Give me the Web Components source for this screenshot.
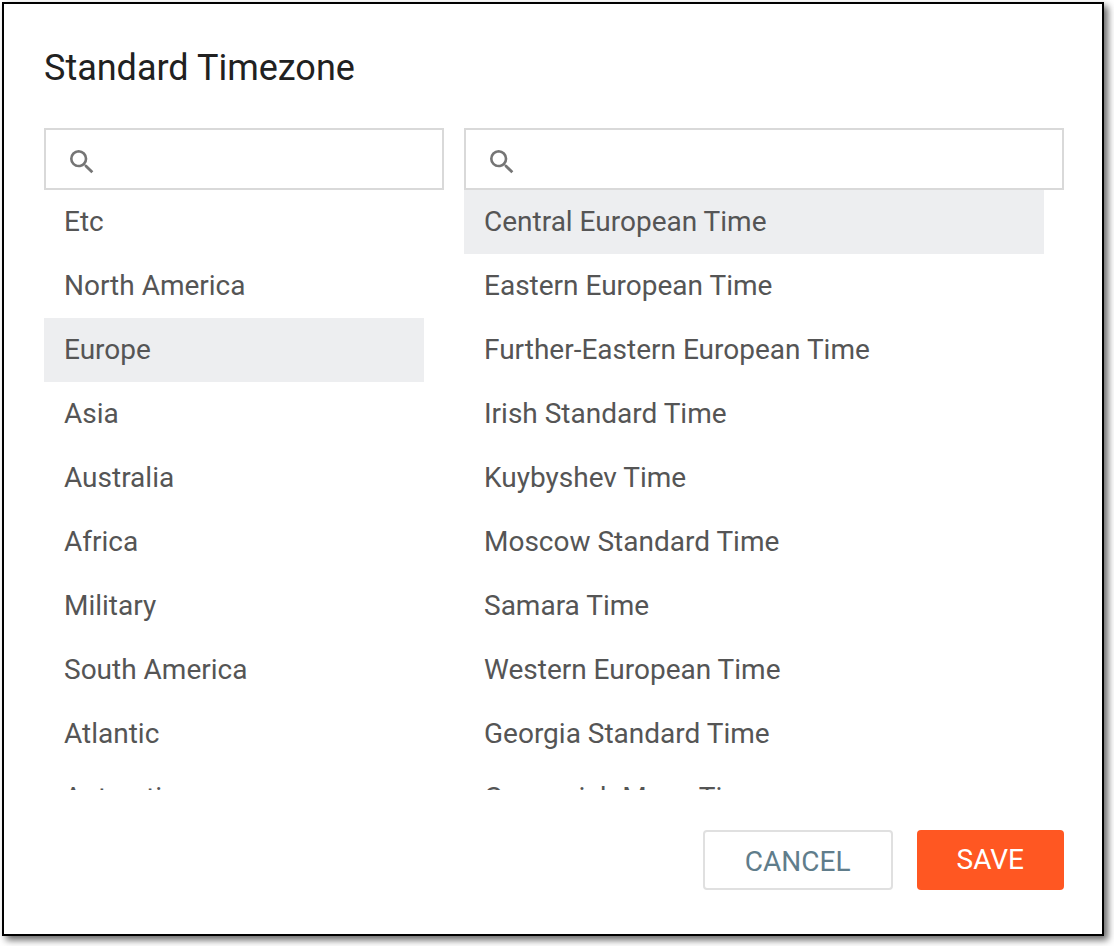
<!DOCTYPE html>
<html lang="en">
<head>
<meta charset="utf-8">
<title>Standard Timezone</title>
<style>
  body { margin: 0; padding: 2px 10px 10px 2px; background: #fff; font-family: Roboto, "Liberation Sans", sans-serif; color: #555; }
</style>
</head>
<body>
<modal-dialog>
  <span slot="title">Standard Timezone</span>
  <timezone-picker></timezone-picker>
  <action-button slot="actions">CANCEL</action-button>
  <action-button slot="actions" primary>SAVE</action-button>
</modal-dialog>

<script>
const REGIONS = ['Etc', 'North America', 'Europe', 'Asia', 'Australia', 'Africa', 'Military', 'South America', 'Atlantic', 'Antarctica'];
const ZONES = ['Central European Time', 'Eastern European Time', 'Further-Eastern European Time', 'Irish Standard Time', 'Kuybyshev Time', 'Moscow Standard Time', 'Samara Time', 'Western European Time', 'Georgia Standard Time', 'Greenwich Mean Time'];

class ModalDialog extends HTMLElement {
  constructor() {
    super();
    this.attachShadow({ mode: 'open' });
    this.shadowRoot.innerHTML = `
      <style>
        :host { display: block; }
        section { padding: 40px 38px 44px 40px; border: 2px solid #000; background: #fff; box-shadow: 4px 4px 7px rgba(0, 0, 0, .6); }
        h1 { margin: 0 0 36px; font-size: 36px; line-height: 48px; font-weight: 400; color: #212121; }
        footer { display: flex; justify-content: flex-end; gap: 24px; margin-top: 40px; }
      </style>
      <section role="dialog" aria-labelledby="title">
        <h1 id="title"><slot name="title"></slot></h1>
        <slot></slot>
        <footer><slot name="actions"></slot></footer>
      </section>
    `;
  }
}

class SearchBox extends HTMLElement {
  constructor() {
    super();
    this.attachShadow({ mode: 'open' });
  }

  connectedCallback() {
    this.shadowRoot.innerHTML = `
      <style>
        :host { display: block; }
        label { display: flex; gap: 12px; padding: 16px 20px 10px; border: 2px solid #d9d9d9; }
        svg { flex: none; width: 32px; height: 32px; fill: #757575; }
        input { flex: 1; min-width: 0; height: 32px; padding: 0; border: 0; outline: 0; background: none; font: inherit; font-size: 28px; color: inherit; }
      </style>
      <label>
        <svg viewBox="0 0 24 24" aria-hidden="true"><path d="M15.5 14h-.79l-.28-.27A6.471 6.471 0 0 0 16 9.5 6.5 6.5 0 1 0 9.5 16c1.61 0 3.09-.59 4.23-1.57l.27.28v.79l5 4.99L20.49 19l-4.99-5zm-6 0C7.01 14 5 11.99 5 9.5S7.01 5 9.5 5 14 7.01 14 9.5 11.99 14 9.5 14z"/></svg>
        <input type="text" aria-label="${this.getAttribute('label')}">
      </label>
    `;
    this.shadowRoot.querySelector('input').oninput = (e) => {
      this.dispatchEvent(new CustomEvent('search', { detail: e.target.value }));
    };
  }
}

class OptionList extends HTMLElement {
  constructor() {
    super();
    this.attachShadow({ mode: 'open' });
    this.options = [];
    this.selected = null;
    this.filter = '';
    this.shadowRoot.innerHTML = `
      <style>
        :host { display: block; min-width: 0; }
        ul { height: 600px; margin: 0; padding: 0 20px 0 0; list-style: none; overflow-y: auto; scrollbar-width: none; }
        button { display: block; width: 100%; height: 64px; padding: 0 20px 2px; border: 0; background: none; font: inherit; font-size: 28px; color: inherit; text-align: left; cursor: pointer; }
        button.selected { background: #edeef0; }
      </style>
      <search-box label="Search ${this.getAttribute('label')}"></search-box>
      <ul></ul>
    `;
    this.shadowRoot.querySelector('search-box').addEventListener('search', (e) => {
      this.filter = e.detail.toLowerCase();
      this.updateList();
    });
  }

  setOptions(options, selected) {
    this.options = options;
    this.selected = selected;
    this.updateList();
  }

  updateList() {
    const list = this.shadowRoot.querySelector('ul');
    list.innerHTML = '';
    this.options.filter(o => o.toLowerCase().includes(this.filter)).forEach((option) => {
      const item = document.createElement('li');
      const button = document.createElement('button');
      button.type = 'button';
      button.textContent = option;
      button.setAttribute('aria-pressed', option === this.selected);
      if (option === this.selected) button.classList.add('selected');
      button.onclick = () => {
        this.selected = option;
        this.updateList();
      };
      item.appendChild(button);
      list.appendChild(item);
    });
  }
}

class TimezonePicker extends HTMLElement {
  constructor() {
    super();
    this.attachShadow({ mode: 'open' });
    this.shadowRoot.innerHTML = `
      <style>
        :host { display: grid; grid-template-columns: 2fr 3fr; gap: 20px; }
      </style>
      <option-list id="regions" label="regions"></option-list>
      <option-list id="zones" label="timezones"></option-list>
    `;
  }

  connectedCallback() {
    this.shadowRoot.getElementById('regions').setOptions(REGIONS, 'Europe');
    this.shadowRoot.getElementById('zones').setOptions(ZONES, 'Central European Time');
  }
}

class ActionButton extends HTMLElement {
  constructor() {
    super();
    this.attachShadow({ mode: 'open' });
    this.shadowRoot.innerHTML = `
      <style>
        :host { display: block; }
        button { display: block; height: 60px; padding: 2px 40px 0; border: 2px solid #e0e0e0; border-radius: 4px; background: #fff; font: inherit; font-size: 28px; color: #607d8b; cursor: pointer; }
        :host([primary]) button { padding: 0 40px 2px; border: 0; background: #ff5722; color: #fff; }
      </style>
      <button type="button"><slot></slot></button>
    `;
  }
}

customElements.define('modal-dialog', ModalDialog);
customElements.define('search-box', SearchBox);
customElements.define('option-list', OptionList);
customElements.define('timezone-picker', TimezonePicker);
customElements.define('action-button', ActionButton);
</script>
</body>
</html>
